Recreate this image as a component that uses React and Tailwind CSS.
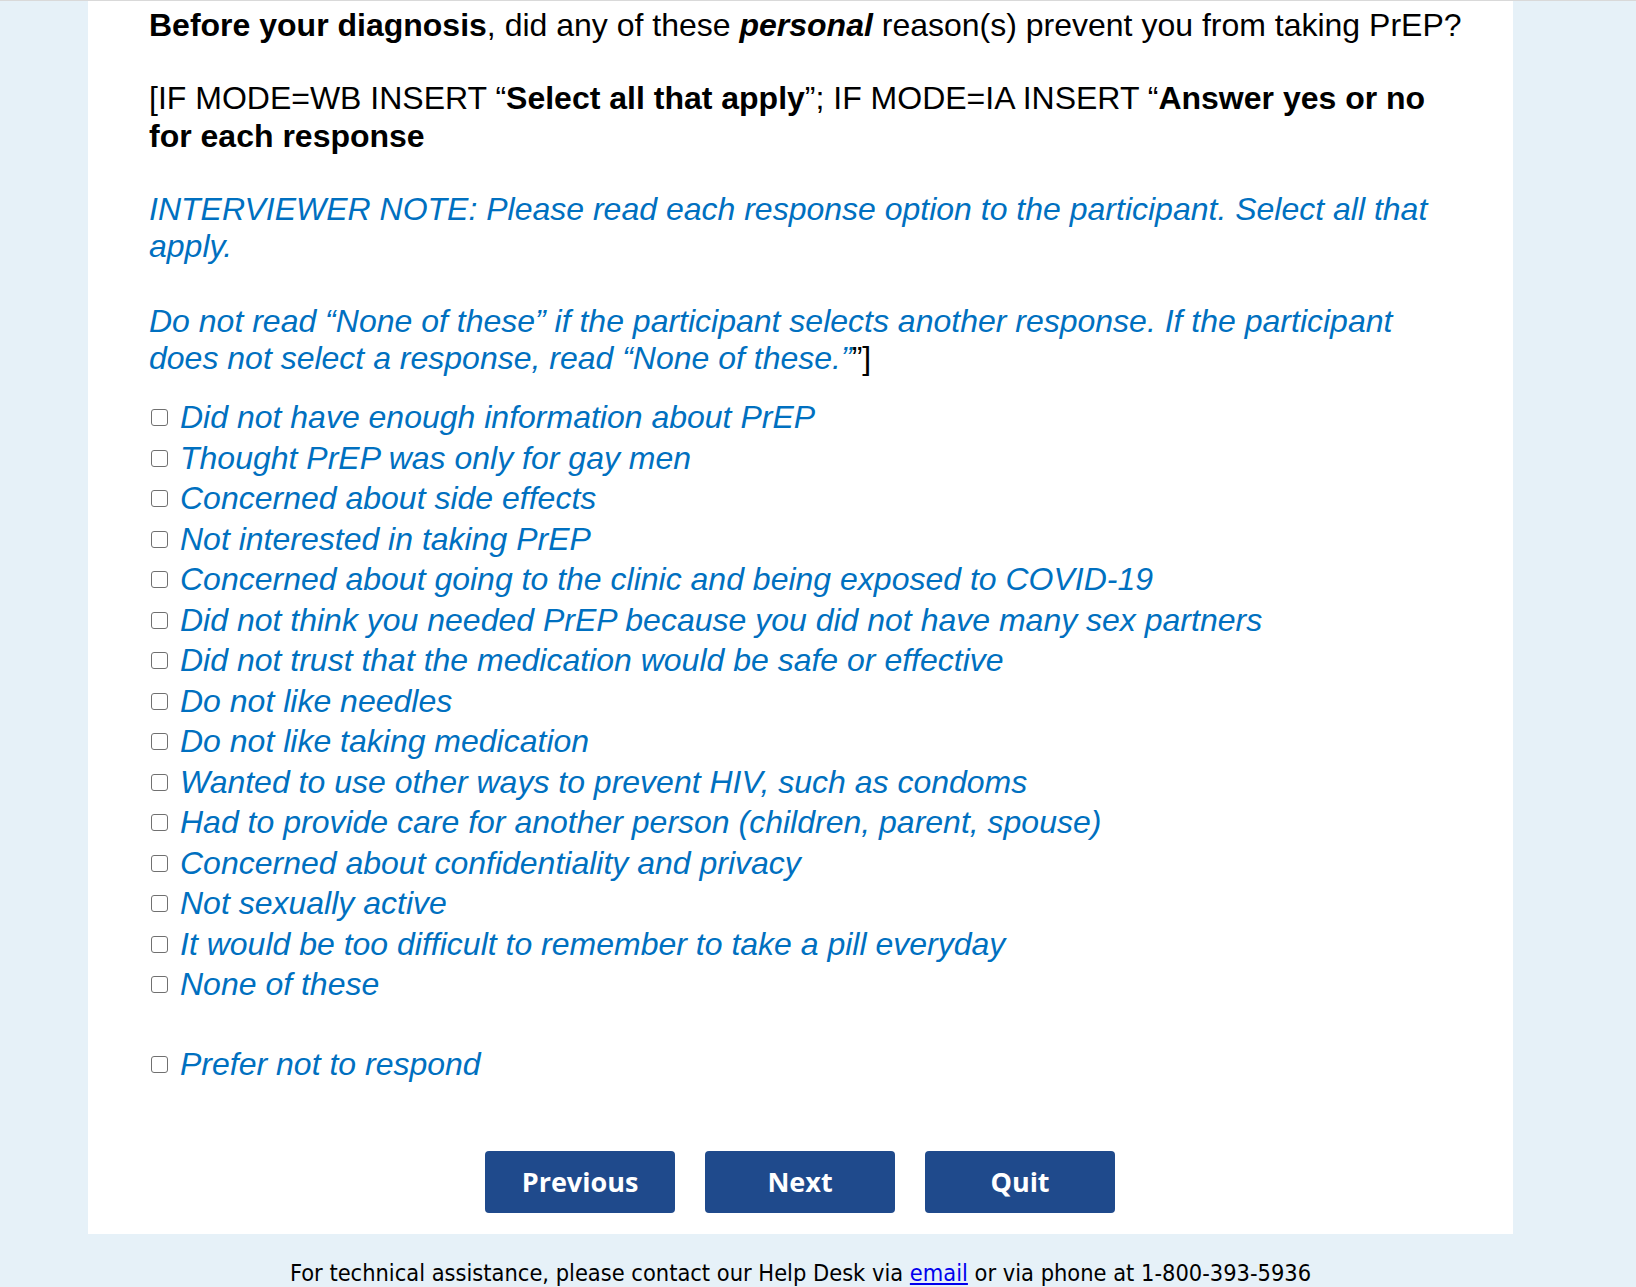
import React from 'react';

const reasons = [
  'Did not have enough information about PrEP',
  'Thought PrEP was only for gay men',
  'Concerned about side effects',
  'Not interested in taking PrEP',
  'Concerned about going to the clinic and being exposed to COVID-19',
  'Did not think you needed PrEP because you did not have many sex partners',
  'Did not trust that the medication would be safe or effective',
  'Do not like needles',
  'Do not like taking medication',
  'Wanted to use other ways to prevent HIV, such as condoms',
  'Had to provide care for another person (children, parent, spouse)',
  'Concerned about confidentiality and privacy',
  'Not sexually active',
  'It would be too difficult to remember to take a pill everyday',
  'None of these',
];

function Option({ label }) {
  return (
    <label className="flex items-center h-[40.5px]">
      <input
        type="checkbox"
        className="appearance-none w-[17px] h-[17px] ml-[2px] mr-[12px] shrink-0 bg-white border border-[#707070] rounded-[3px]"
      />
      <span className="italic text-[#0070c0]">{label}</span>
    </label>
  );
}

export default function App() {
  return (
    <div className="min-h-screen bg-[#e6f1f8] border-t border-[#d9d9d9]">
      <div className="ml-[88px] w-[1425px]">
        {/* Question panel */}
        <div className="bg-white pl-[61px] pr-[46px] pt-[6px] pb-[21px] text-[32px] leading-[37.5px] text-black font-['Liberation_Sans',Arial,sans-serif]">
          <p>
            <b>Before your diagnosis</b>, did any of these <b><i>personal</i></b> reason(s) prevent you from taking PrEP?
          </p>
          <p className="mt-[35.5px]">
            [IF MODE=WB INSERT “<b>Select all that apply</b>”; IF MODE=IA INSERT “<b>Answer yes or no for each response</b>
          </p>
          <p className="mt-[35.5px] italic text-[#0070c0]">
            INTERVIEWER NOTE: Please read each response option to the participant. Select all that apply.
          </p>
          <p className="mt-[37px]">
            <i className="text-[#0070c0]">
              Do not read “None of these” if the participant selects another response. If the participant does not select a response, read “None of these.”
            </i>
            ”]
          </p>

          <div className="mt-[20px]">
            {reasons.map((r) => (
              <Option key={r} label={r} />
            ))}
            <div className="mt-[39.5px]">
              <Option label="Prefer not to respond" />
            </div>
          </div>

          <div className="mt-[66px] mr-[16px] flex justify-center gap-[30px] font-['Open_Sans',sans-serif]">
            {['Previous', 'Next', 'Quit'].map((b) => (
              <button
                key={b}
                className="w-[190px] h-[62px] rounded bg-[#1f4a8c] text-white text-[27px] font-bold"
              >
                {b}
              </button>
            ))}
          </div>
        </div>

        {/* Footer */}
        <p className="pt-[22px] text-center text-[23.4px] text-black font-['DejaVu_Sans_Condensed',Tahoma,sans-serif]">
          For technical assistance, please contact our Help Desk via{' '}
          <a href="#" className="text-[#0000ee] underline">email</a> or via phone at 1-800-393-5936
        </p>
      </div>
    </div>
  );
}
